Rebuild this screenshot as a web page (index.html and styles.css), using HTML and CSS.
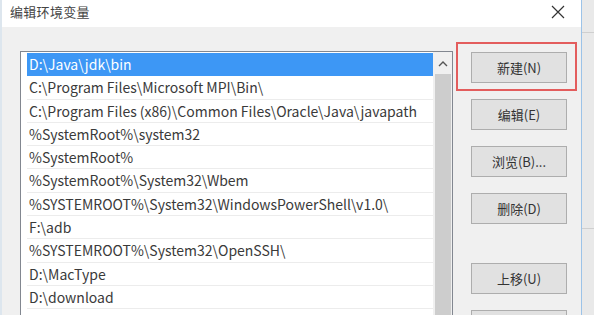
FILE: index.html
```html
<!DOCTYPE html>
<html lang="zh-CN">
<head>
<meta charset="utf-8">
<link rel="stylesheet" href="styles.css">
</head>
<body>
<div class="screen">
  <div class="window">
    <div class="titlebar">
      <span class="title">编辑环境变量</span>
      <svg class="close" width="14" height="14" viewBox="0 0 14 14"><path d="M1 1 L13 13 M13 1 L1 13" stroke="#333" stroke-width="1.2" fill="none"/></svg>
    </div>
    <div class="content">
      <div class="listbox">
        <ul class="items">
          <li class="sel">D:\Java\jdk\bin</li>
          <li>C:\Program Files\Microsoft MPI\Bin\</li>
          <li>C:\Program Files (x86)\Common Files\Oracle\Java\javapath</li>
          <li>%SystemRoot%\system32</li>
          <li>%SystemRoot%</li>
          <li>%SystemRoot%\System32\Wbem</li>
          <li>%SYSTEMROOT%\System32\WindowsPowerShell\v1.0\</li>
          <li>F:\adb</li>
          <li>%SYSTEMROOT%\System32\OpenSSH\</li>
          <li>D:\MacType</li>
          <li>D:\download</li>
          <li></li>
        </ul>
        <div class="scrollbar">
          <svg class="arrow" width="10" height="6" viewBox="0 0 10 6"><path d="M1 5 L5 1 L9 5" stroke="#555" stroke-width="1.4" fill="none"/></svg>
          <div class="thumb"></div>
        </div>
      </div>
      <div class="buttons">
        <div class="btn-wrap">
          <button class="btn">新建(N)</button>
          <div class="highlight"></div>
        </div>
        <button class="btn">编辑(E)</button>
        <button class="btn">浏览(B)...</button>
        <button class="btn">删除(D)</button>
        <button class="btn gap-top">上移(U)</button>
        <button class="btn">下移(O)</button>
      </div>
    </div>
  </div>
  <div class="backdrop">
    <div class="bd-line l1"></div>
    <div class="bd-line l2"></div>
  </div>
</div>
</body>
</html>
```

FILE: styles.css
```css
html, body {
  margin: 0;
  padding: 0;
  overflow: hidden;
}
body {
  width: 594px;
  height: 315px;
  font-family: "Noto Sans CJK SC", "Noto Sans", sans-serif;
  color: #3a3a3a;
}
.screen {
  display: flex;
  width: 594px;
  height: 315px;
  overflow: hidden;
}
.window {
  width: 582px;
  height: 315px;
  background: #f0f0f0;
  border-left: 2px solid #dde6ee;
  border-right: 1px solid #9cc3e8;
  box-sizing: border-box;
  display: flex;
  flex-direction: column;
  overflow: hidden;
}
.titlebar {
  height: 27px;
  flex: none;
  box-sizing: border-box;
  background: #ffffff;
  display: flex;
  align-items: center;
  justify-content: space-between;
  padding: 0 16px 5px 8px;
}
.title {
  font-size: 13px;
  color: #444;
  letter-spacing: 0.3px;
}
.close {
  margin-top: 2px;
}
.content {
  flex: 1;
  display: flex;
  align-items: flex-start;
  padding: 24px 0 0 18px;
  min-height: 0;
}
.listbox {
  width: 433px;
  height: 300px;
  flex: none;
  background: #fff;
  border: 1px solid #828790;
  box-sizing: border-box;
  display: flex;
}
.items {
  list-style: none;
  margin: 0;
  padding: 1px 0 0 6px;
  flex: 1;
  min-width: 0;
}
.items li {
  height: 23.3px;
  box-sizing: border-box;
  border-bottom: 1px solid #ececec;
  font-size: 14px;
  line-height: 22px;
  padding-left: 2px;
  white-space: nowrap;
  overflow: hidden;
}
.items li.sel {
  background: #3d97f5;
  color: #fff;
  border-bottom-color: #3d97f5;
}
.scrollbar {
  width: 19px;
  flex: none;
  background: #f0f0f0;
  display: flex;
  flex-direction: column;
  align-items: center;
}
.arrow {
  margin-top: 9px;
  height: 6px;
}
.thumb {
  margin-top: 7px;
  width: 16px;
  flex: 1;
  background: #cdcdcd;
}
.buttons {
  margin-left: 18px;
  margin-top: 1px;
  width: 96px;
  display: flex;
  flex-direction: column;
  gap: 16px;
}
.btn-wrap {
  position: relative;
}
.btn {
  display: block;
  width: 96px;
  height: 31px;
  box-sizing: border-box;
  background: #e1e1e1;
  border: 1px solid #adadad;
  font-family: "Noto Sans CJK SC", "Noto Sans", sans-serif;
  font-size: 13px;
  color: #333;
  padding: 0;
}
.btn.gap-top {
  margin-top: 23px;
}
.highlight {
  position: absolute;
  left: -15px;
  top: -10px;
  width: 121px;
  height: 49px;
  border: 2px solid #e35d5d;
  box-sizing: border-box;
}
.backdrop {
  flex: 1;
  background: #e9e9e9;
  position: relative;
}
.bd-line {
  position: absolute;
  left: 0;
  right: 0;
  height: 1px;
  background: #cfcfcf;
}
.bd-line.l1 { top: 32px; }
.bd-line.l2 { top: 228px; }
```
